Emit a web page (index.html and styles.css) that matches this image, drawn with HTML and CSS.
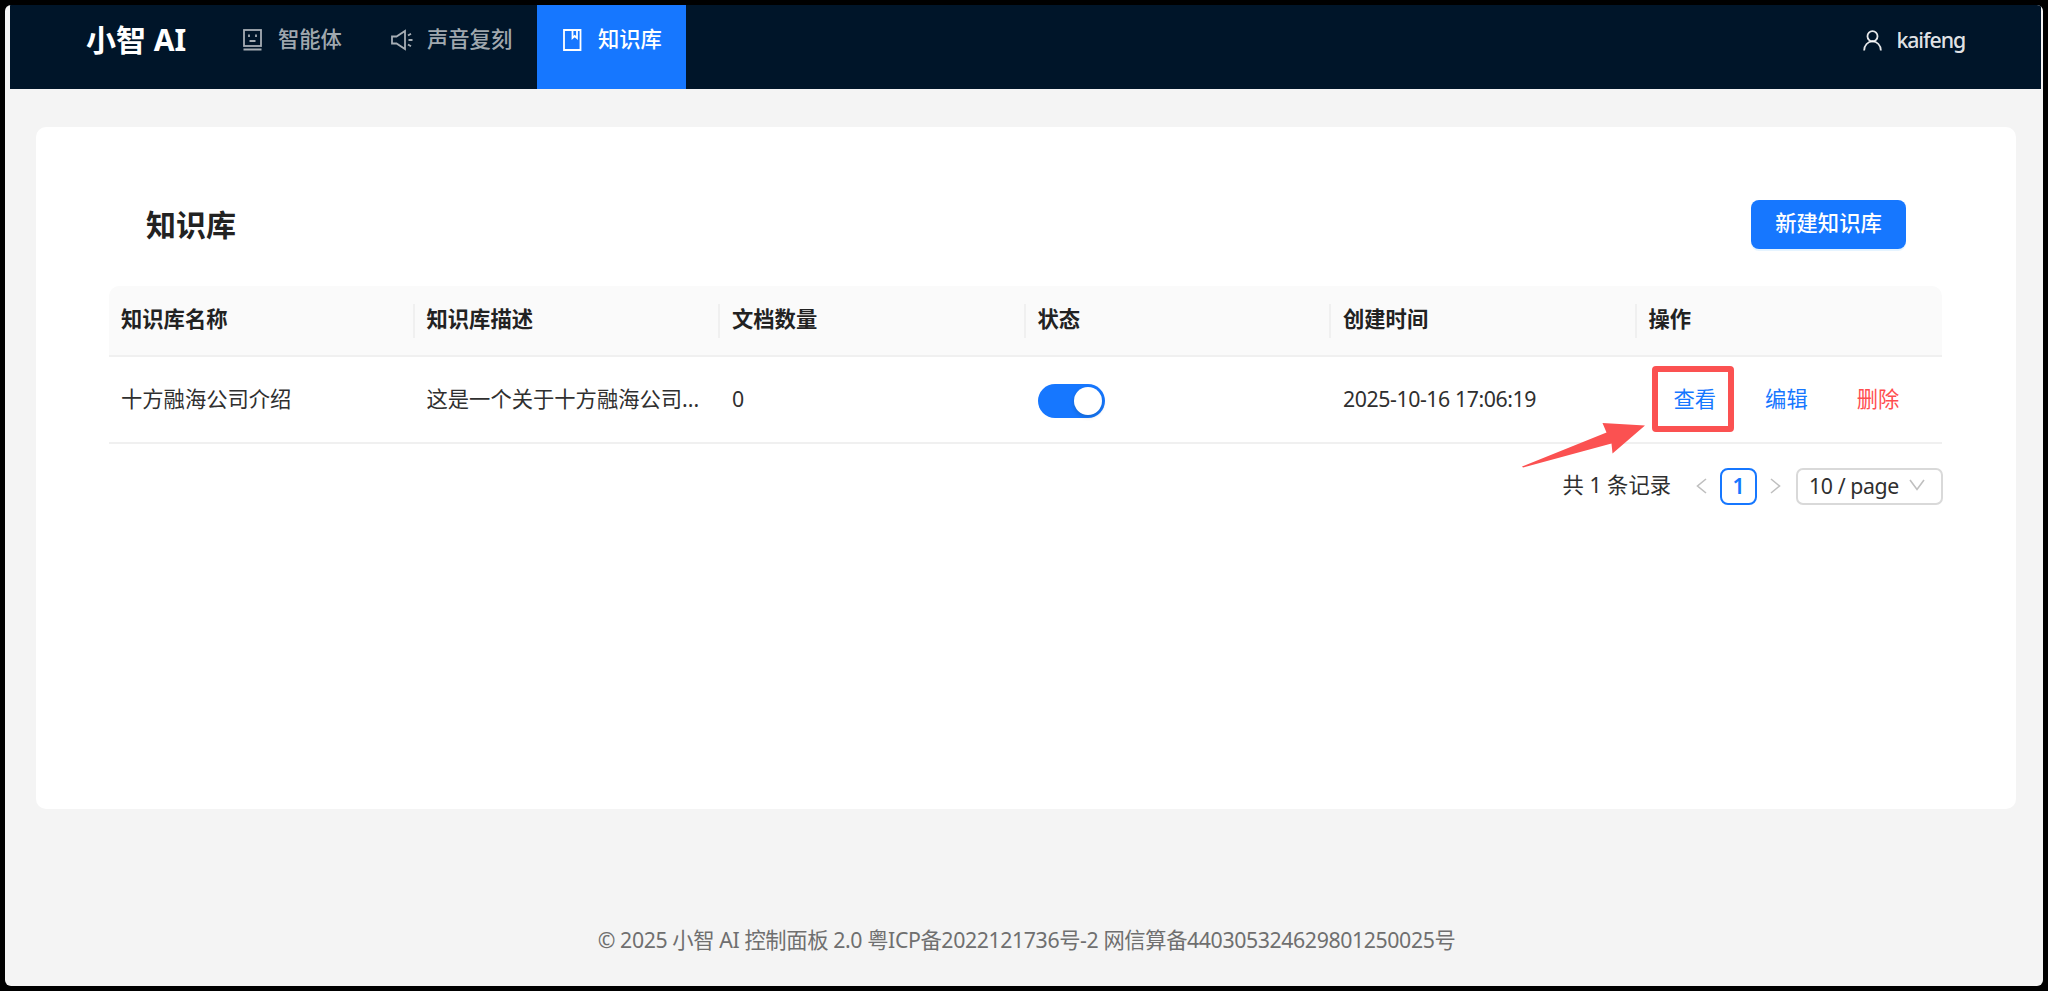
FILE: index.html
```
<!DOCTYPE html>
<html lang="zh-CN">
<head>
  <meta charset="UTF-8">
  <meta name="viewport" content="width=device-width, initial-scale=1.0">
  <title>知识库 - 小智 AI</title>
  <link rel="stylesheet" href="styles.css">
</head>
<body>
  <div class="window">

    <!-- Header -->
    <header class="navbar">
      <div class="logo">小智 AI</div>
      <nav class="menu">
        <a class="menu-item item-agent">
          <svg class="menu-icon" viewBox="0 0 19 22" fill="none" stroke="currentColor" stroke-width="1.8">
            <rect x="1" y="1" width="17" height="16"/>
            <path d="M6 5.500v2.500M13 5.500v2.500M6.500 12h6M.5 20.500h18"/>
          </svg>
          <span>智能体</span>
        </a>
        <a class="menu-item item-voice">
          <svg class="menu-icon voice" viewBox="0 0 22 22" fill="none" stroke="currentColor" stroke-width="1.8">
            <path d="M1 7.500h4.500L14 2v18l-8.500-5.500H1zM17.500 11h4M17 6.500l3-1.800M17 15.500l3 1.800"/>
          </svg>
          <span>声音复刻</span>
        </a>
        <a class="menu-item item-kb active">
          <svg class="menu-icon" viewBox="0 0 19 22" fill="none" stroke="currentColor" stroke-width="1.8">
            <path d="M1 1h16.500v20H1zM9.500 1v8l2.200-2L14 9V1"/>
          </svg>
          <span>知识库</span>
        </a>
      </nav>
      <div class="user">
        <svg class="user-icon" viewBox="0 0 20 22" fill="none" stroke="currentColor" stroke-width="1.9">
          <circle cx="10" cy="6.500" r="5.300"/>
          <path d="M1.200 21.500c0-5.500 4-9.500 8.800-9.500s8.800 4 8.800 9.500"/>
        </svg>
        <span>kaifeng</span>
      </div>
    </header>

    <!-- Main Content -->
    <main class="card">
      <div class="card-head">
        <h2>知识库</h2>
        <button class="btn-create">新建知识库</button>
      </div>

      <table class="kb-table">
        <thead>
          <tr>
            <th>知识库名称</th>
            <th>知识库描述</th>
            <th>文档数量</th>
            <th>状态</th>
            <th>创建时间</th>
            <th>操作</th>
          </tr>
        </thead>
        <tbody>
          <tr>
            <td>十方融海公司介绍</td>
            <td>这是一个关于十方融海公司...</td>
            <td>0</td>
            <td><span class="switch"><span class="knob"></span></span></td>
            <td class="time">2025-10-16 17:06:19</td>
            <td>
              <div class="actions">
                <a class="view">查看
                  <span class="mark-box"></span>
                  <svg class="mark-arrow" viewBox="0 0 124 46"><path d="M0 43.500L84.500 9.500 80.500 0l42.500 2.500L90.500 30.500l-1-10L1 44.500z" fill="#fb5151"/></svg>
                </a>
                <a>编辑</a>
                <a class="danger">删除</a>
              </div>
            </td>
          </tr>
        </tbody>
      </table>

      <!-- Pagination -->
      <div class="pagination">
        <span class="total">共 1 条记录</span>
        <svg class="arrow prev" viewBox="0 0 11 16"><path d="M10 1L1.500 8l8.500 7"/></svg>
        <span class="page">1</span>
        <svg class="arrow next" viewBox="0 0 11 16"><path d="M1 1l8.500 7L1 15"/></svg>
        <span class="page-size">10 / page
          <svg class="down" viewBox="0 0 16 12"><path d="M1 1l7 9.500L15 1"/></svg>
        </span>
      </div>
    </main>

    <footer class="footer">© 2025 小智 AI 控制面板 2.0 粤ICP备2022121736号-2 网信算备440305324629801250025号</footer>
  </div>
</body>
</html>
```
FILE: styles.css
```
* {
  box-sizing: border-box;
}

body {
  margin: 0;
  padding: 5px;
  height: 991px;
  background: #000;
  color: #2f2f2f;
  font-family: "Noto Sans", "Noto Sans CJK SC", sans-serif;
  font-size: 21.3px;
  line-height: 32px;
}

.window {
  width: 2038px;
  height: 981px;
  padding: 0 2px 0 5px;
  background: #f4f4f4;
  border-radius: 6px;
  overflow: hidden;
}

.navbar {
  display: flex;
  height: 83.5px;
  background: #001529;
  color: rgba(255, 255, 255, 0.65);
}

.logo {
  width: 207px;
  padding: 19px 0 0 76px;
  color: #fff;
  font-size: 30px;
  font-weight: 700;
  white-space: nowrap;
}

.menu {
  display: flex;
  font-weight: 500;
}

.menu-item {
  display: flex;
  gap: 16px;
  height: 83.5px;
  padding: 18px 24px 0 26px;
  white-space: nowrap;
}

.item-agent {
  width: 148px;
}

.item-voice {
  width: 172px;
  gap: 14px;
}

.item-kb {
  width: 149px;
}

.menu-icon {
  flex: none;
  width: 19px;
  height: 22px;
  margin-top: 6px;
}

.menu-icon.voice {
  width: 22px;
}

.active {
  background: #1677ff;
  color: #fff;
}

.user {
  display: flex;
  gap: 14px;
  margin-left: auto;
  padding: 19px 76px 0 0;
  color: rgba(255, 255, 255, 0.9);
  font-weight: 500;
  letter-spacing: -1.1px;
}

.user-icon {
  width: 19px;
  height: 21px;
  margin-top: 6px;
}

.card {
  width: 1980px;
  height: 682px;
  margin: 38px 0 0 26px;
  padding: 73px 73px 0;
  background: #fff;
  border-radius: 10px;
}

.card-head {
  display: flex;
  justify-content: space-between;
  height: 86px;
  padding: 0 37px;
}

.card-head h2 {
  margin: 0;
  color: #222;
  font-size: 30px;
  line-height: 49px;
}

.btn-create {
  width: 155px;
  height: 49px;
  padding: 0 0 3px;
  border: none;
  border-radius: 8px;
  background: #1677ff;
  box-shadow: 0 2px 0 rgba(5, 145, 255, 0.1);
  color: #fff;
  font: inherit;
  font-weight: 500;
}

.kb-table {
  width: 1833px;
  table-layout: fixed;
  border-collapse: separate;
  border-spacing: 0;
}

.kb-table th,
.kb-table td {
  padding: 0 12px 1px;
  border-bottom: 2px solid #f0f0f0;
  text-align: left;
  white-space: nowrap;
}

.kb-table th {
  height: 71px;
  padding-bottom: 2px;
  background: linear-gradient(#f0f0f0, #f0f0f0) right 18px / 2px 34px no-repeat #fafafa;
  color: #222;
  font-weight: 700;
}

.kb-table th:first-child {
  border-top-left-radius: 10px;
}

.kb-table th:last-child {
  background: #fafafa;
  border-top-right-radius: 10px;
}

.kb-table td {
  height: 87px;
}

.kb-table .time {
  letter-spacing: -0.43px;
}

.switch {
  display: block;
  width: 67px;
  height: 34px;
  margin-top: 4px;
  padding: 3px;
  border-radius: 17px;
  background: #1677ff;
}

.knob {
  display: block;
  width: 28px;
  height: 28px;
  margin-left: 33px;
  border-radius: 50%;
  background: #fff;
  box-shadow: 0 2px 4px rgba(0, 35, 11, 0.2);
}

.actions {
  display: flex;
  gap: 49px;
  padding-left: 25px;
  color: #1677ff;
}

.danger {
  color: #ff4d4f;
}

.view {
  position: relative;
}

/* highlight around the view link */
.mark-box {
  position: absolute;
  left: -22px;
  top: -17px;
  width: 82px;
  height: 66px;
  border: 6px solid #fb5151;
  border-radius: 4px;
}

.mark-arrow {
  position: absolute;
  left: -152px;
  top: 40px;
  width: 124px;
  height: 46px;
}

.pagination {
  display: flex;
  justify-content: flex-end;
  align-items: center;
  height: 37px;
  margin-top: 24px;
}

.total {
  margin-top: -2px;
}

.arrow {
  width: 11px;
  height: 16px;
  fill: none;
  stroke: #bfbfbf;
  stroke-width: 1.6;
}

.prev {
  margin: 0 13px 0 25px;
}

.next {
  margin: 0 15px 0 13px;
}

.page {
  width: 37px;
  height: 37px;
  border: 2px solid #1677ff;
  border-radius: 8px;
  color: #1677ff;
  font-weight: 600;
  text-align: center;
}

.page-size {
  display: flex;
  justify-content: space-between;
  align-items: center;
  width: 147px;
  height: 37px;
  padding: 0 16px 0 11px;
  border: 2px solid #d9d9d9;
  border-radius: 7px;
  letter-spacing: -0.4px;
}

.down {
  width: 16px;
  height: 12px;
  margin-top: -2px;
  fill: none;
  stroke: #bfbfbf;
  stroke-width: 1.6;
}

.footer {
  margin-top: 115px;
  padding-left: 2px;
  color: #6f6f6f;
  letter-spacing: -0.4px;
  text-align: center;
}
```
